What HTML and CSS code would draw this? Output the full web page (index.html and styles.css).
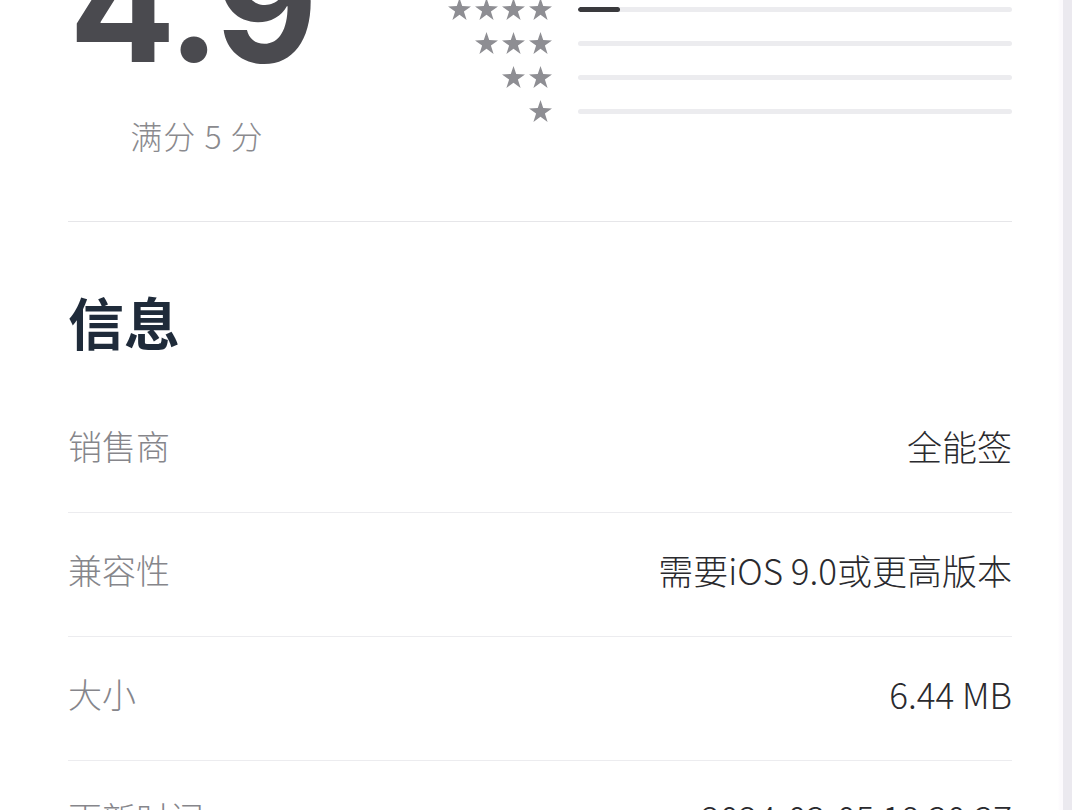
FILE: index.html
```html
<!DOCTYPE html>
<html lang="zh-CN">
<head>
<meta charset="utf-8">
<title>评分及信息</title>
<link rel="stylesheet" href="styles.css">
</head>
<body>
<div class="page">
  <section class="rating">
    <div class="score">
      <div class="score-num">4.9</div>
      <div class="score-max">满分 5 分</div>
    </div>
    <div class="bars">
      <div class="bar-row">
        <div class="stars"><i class="star"></i><i class="star"></i><i class="star"></i><i class="star"></i><i class="star"></i></div>
        <div class="track"><div class="fill" style="width:92%"></div></div>
      </div>
      <div class="bar-row">
        <div class="stars"><i class="star"></i><i class="star"></i><i class="star"></i><i class="star"></i></div>
        <div class="track"><div class="fill" style="width:42px"></div></div>
      </div>
      <div class="bar-row">
        <div class="stars"><i class="star"></i><i class="star"></i><i class="star"></i></div>
        <div class="track"></div>
      </div>
      <div class="bar-row">
        <div class="stars"><i class="star"></i><i class="star"></i></div>
        <div class="track"></div>
      </div>
      <div class="bar-row">
        <div class="stars"><i class="star"></i></div>
        <div class="track"></div>
      </div>
    </div>
  </section>

  <section class="info">
    <h2 class="info-title">信息</h2>
    <dl class="info-list">
      <div class="info-row"><dt>销售商</dt><dd>全能签</dd></div>
      <div class="info-row"><dt>兼容性</dt><dd>需要iOS 9.0或更高版本</dd></div>
      <div class="info-row"><dt>大小</dt><dd>6.44 MB</dd></div>
      <div class="info-row"><dt>更新时间</dt><dd>2024-03-05 18:30:37</dd></div>
    </dl>
  </section>
</div>
<div class="scrollbar"><div class="scrollbar-thumb"></div></div>
</body>
</html>
```

FILE: styles.css
```css
html, body {
  margin: 0;
  padding: 0;
  background: #ffffff;
}

body {
  width: 1080px;
  height: 810px;
  overflow: hidden;
  position: relative;
  font-family: "Noto Sans CJK SC", "Noto Sans", sans-serif;
}

.page {
  padding: 0 68px;
  margin-top: -68px;
}

.rating {
  display: flex;
  align-items: flex-start;
  border-bottom: 1px solid #e6e6e9;
  padding-bottom: 67px;
}

.score {
  width: 248px;
  display: flex;
  flex-direction: column;
  align-items: center;
}

.score-num {
  font-family: Inter, "Noto Sans", sans-serif;
  font-weight: 700;
  font-size: 158px;
  line-height: 156px;
  letter-spacing: -3px;
  color: #4a4a4f;
  height: 156px;
  margin-top: -5px;
}

.score-max {
  margin-top: 33px;
  padding-left: 10px;
  font-size: 32px;
  line-height: 38px;
  font-weight: 300;
  color: #8a8a8e;
  letter-spacing: 1px;
}

.bars {
  margin-left: 126px;
  flex: 1;
  display: flex;
  flex-direction: column;
  padding-top: 26px;
}

.bar-row {
  display: flex;
  align-items: center;
  height: 34px;
}

.stars {
  width: 110px;
  display: flex;
  justify-content: flex-end;
  gap: 4px;
}

.star {
  display: block;
  width: 23px;
  height: 22px;
  background: #8e8e93;
  clip-path: polygon(50% 0%, 61.8% 36.2%, 100% 38.2%, 69.1% 60.8%, 80.9% 100%, 50% 76.4%, 19.1% 100%, 30.9% 60.8%, 0% 38.2%, 38.2% 36.2%);
}

.track {
  margin-left: 26px;
  flex: 1;
  height: 5px;
  border-radius: 3px;
  background: #ececef;
  overflow: hidden;
}

.fill {
  height: 100%;
  border-radius: 3px;
  background: #3a3a3d;
}

.info-title {
  margin: 64px 0 0;
  font-size: 56px;
  line-height: 70px;
  font-weight: 700;
  color: #1f2b3a;
}

.info-list {
  margin: 33px 0 0;
}

.info-row {
  display: flex;
  justify-content: space-between;
  align-items: center;
  height: 123px;
  border-bottom: 1px solid #ececef;
}

.info-row dt {
  font-size: 34px;
  line-height: 40px;
  font-weight: 300;
  color: #86868b;
  margin-bottom: 10px;
}

.info-row dd {
  margin: 0 0 10px;
  font-size: 35px;
  line-height: 40px;
  font-weight: 300;
  color: #2a2a2e;
}

.scrollbar {
  position: absolute;
  top: 0;
  right: 0;
  width: 22px;
  height: 810px;
  background: linear-gradient(to right, #ffffff 0, #fcfafd 2px, #fcfafd 5px, transparent 5px);
}

.scrollbar-thumb {
  position: absolute;
  top: 0;
  left: 5px;
  width: 9px;
  height: 810px;
  background: #ebe9ef;
}
```
